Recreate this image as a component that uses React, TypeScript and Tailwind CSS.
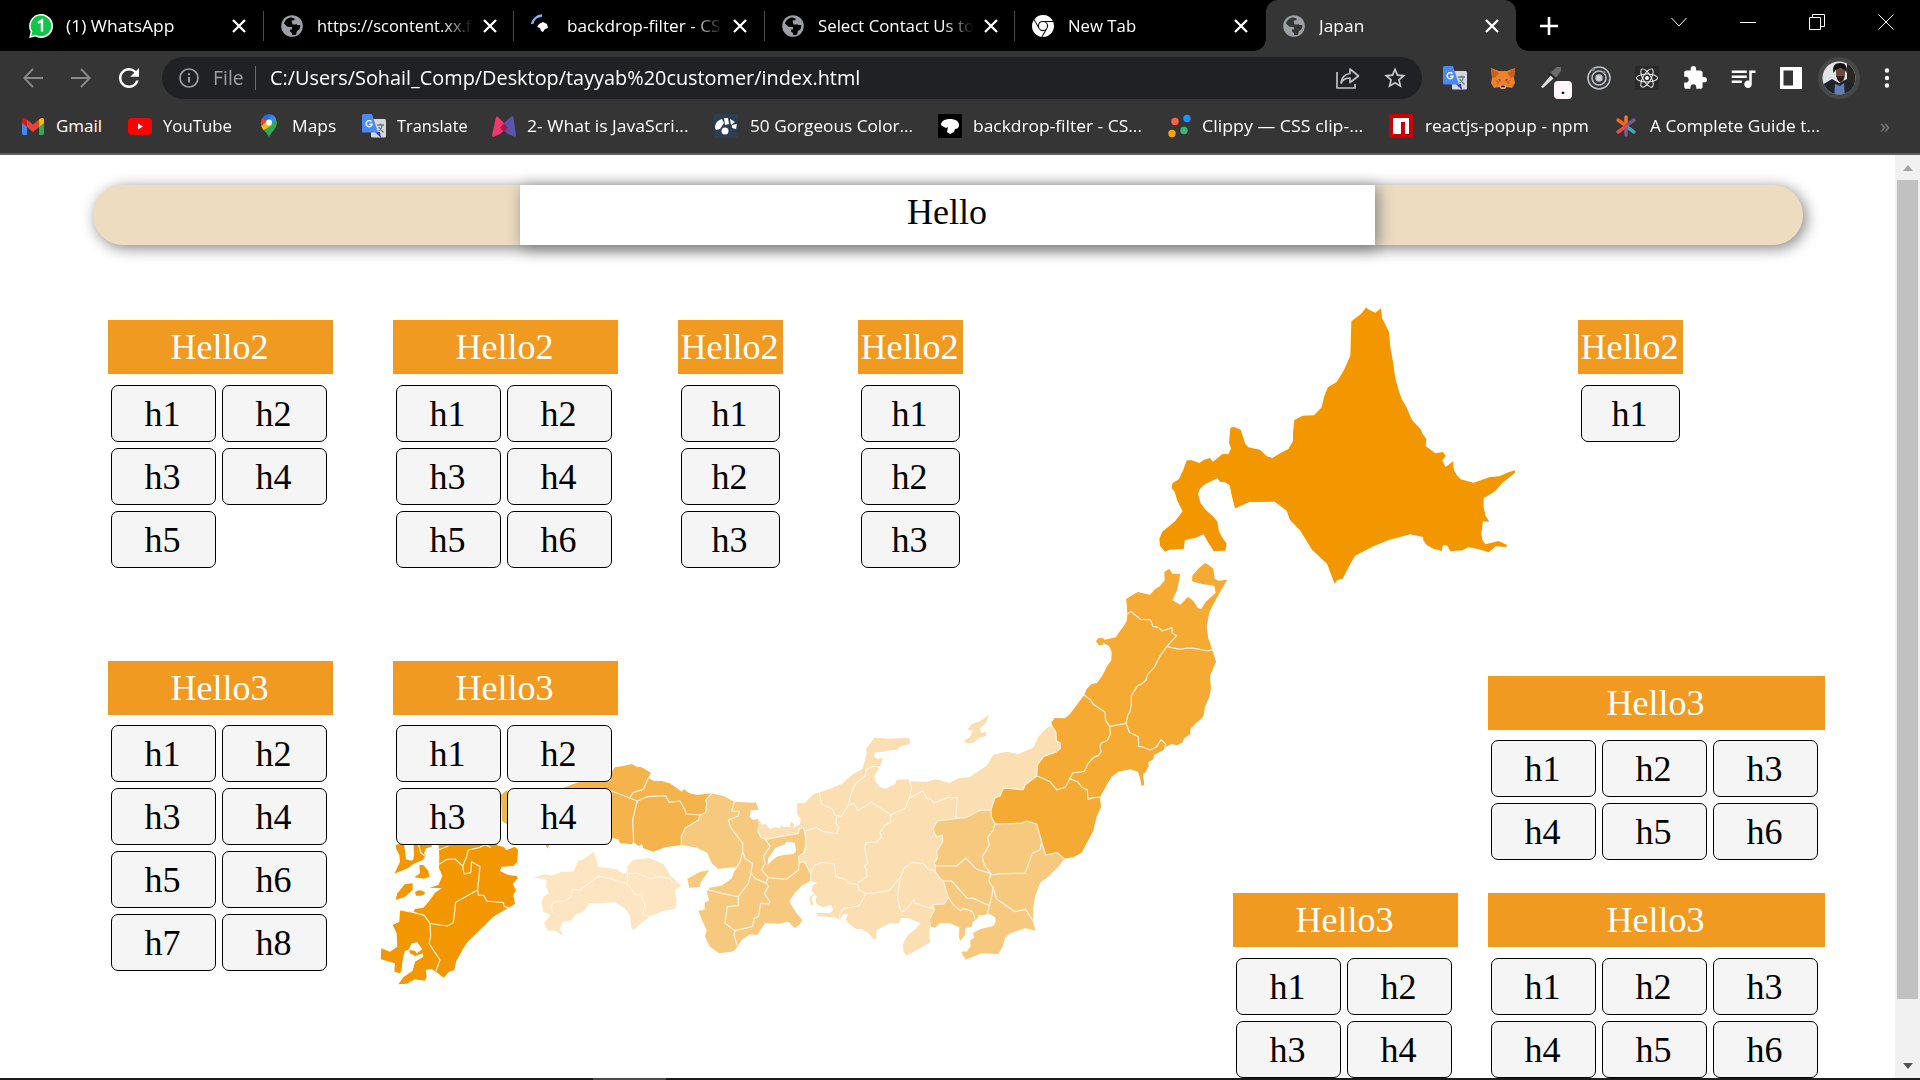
import { useLayoutEffect, useRef, type ReactNode } from "react";
import { FaReact } from "react-icons/fa";
import { MdExtension, MdQueueMusic, MdRefresh, MdStarBorder } from "react-icons/md";
import { SiGooglechrome } from "react-icons/si";

/* One line of text, condensed or stretched to a set advance width. */
function FitText({ children, width, className = "" }: { children: string; width: number; className?: string }) {
  const ref = useRef<HTMLSpanElement>(null);
  useLayoutEffect(() => {
    const el = ref.current;
    if (el) el.style.transform = `scaleX(${width / el.offsetWidth})`;
  }, [width]);
  return (
    <span className={`block shrink-0 whitespace-nowrap ${className}`} style={{ width }}>
      <span ref={ref} className="inline-block origin-left">
        {children}
      </span>
    </span>
  );
}

function Close() {
  return (
    <svg viewBox="0 0 14 14" className="size-3.5" stroke="#fff" strokeWidth="2.3" fill="none">
      <path d="M1 1l12 12M13 1L1 13" />
    </svg>
  );
}

function Globe({ back }: { back: string }) {
  return (
    <svg viewBox="0 0 22 22" className="size-[22px]">
      <circle cx="11" cy="11" r="10.800" fill="#9aa0a6" />
      <path
        d="M10.500 2.500C7 2.500 4 5 3 8.500l3.500 3.200 4.500.3v2.500H9v2l2 1.500v2c1.500.2 3-.1 4-.6l1-3.400 2.200-1.500c.8-1.500 1.200-3 1-4.500H16l-1-2h-4V6h2.500V3.500z"
        fill={back}
      />
      <path d="M10.500 5.500l5-.5 1.500 3-2.500 1.500h-3z" fill="#9aa0a6" />
    </svg>
  );
}

function WhatsApp() {
  return (
    <svg viewBox="0 0 24 24" className="size-6">
      <path d="M12 0a12 12 0 1 1-5.6 22.6L.2 24l1.4-6.2A12 12 0 0 1 12 0z" fill="#fff" />
      <path d="M12 1.600a10.300 10.300 0 1 1-5.200 19.200L2.200 21.900l1.200-4.400A10.300 10.300 0 0 1 12 1.600z" fill="#10c34b" />
      <path d="M9 9l4-2.500v11" fill="none" stroke="#fff" strokeWidth="2.400" />
    </svg>
  );
}

function Loading() {
  return (
    <svg viewBox="0 0 24 24" className="size-6">
      <path d="M2 10A11 11 0 0 1 12 1.500" stroke="#8ab4f8" strokeWidth="2.500" fill="none" />
      <path d="M7 13l2-3 4-2 4 2 1 4-3 1-2 3-2-1-1-3z" fill="#fff" />
    </svg>
  );
}

function Translate() {
  return (
    <svg viewBox="0 0 24 24" className="size-6">
      <rect x="9" y="5" width="15" height="18.500" rx="1.500" fill="#d5d9dd" />
      <path d="M13 18l6 6-1-6z" fill="#3337c9" />
      <path d="M1.500 0H10l6 18.500H1.500A1.500 1.500 0 0 1 0 17V1.500A1.500 1.500 0 0 1 1.500 0z" fill="#4a8af4" />
      <path d="M15 11h7M18.500 9.500V11M20.500 11c-.5 3-2.500 5-4 6M16.500 13l5 5.500" stroke="#647f8c" strokeWidth="1.300" fill="none" />
      <path d="M9.500 7.800a3 3 0 1 0 .6 2.400H7.300" stroke="#fff" strokeWidth="1.400" fill="none" />
    </svg>
  );
}

function Gmail() {
  return (
    <svg viewBox="0 0 22 17" className="h-[17px] w-[22px]">
      <path d="M0 2.500L5 6v11H1.500A1.500 1.500 0 0 1 0 15.500z" fill="#4285f4" />
      <path d="M22 2.500L17 6v11h3.500a1.500 1.500 0 0 0 1.500-1.500z" fill="#34a853" />
      <path d="M17 1.500L19 .3A2 2 0 0 1 22 2v3l-5 4z" fill="#fbbc04" />
      <path d="M5 1.500L3 .3A2 2 0 0 0 0 2v3l5 4z" fill="#c5221f" />
      <path d="M5 1.500l6 5 6-5V9l-6 5-6-5z" fill="#ea4335" />
    </svg>
  );
}

function YouTube() {
  return (
    <svg viewBox="0 0 24 17" className="h-[17px] w-6">
      <rect width="24" height="17" rx="4" fill="#f00" />
      <path d="M10 5.500v6l5-3z" fill="#fff" />
    </svg>
  );
}

function MapsPin() {
  return (
    <svg viewBox="0 0 18 24" className="h-6 w-[18px]">
      <path d="M9 24c0-4 8-9 8-15.500A8 8 0 0 0 14.500 3L2.500 14.500C5 18 8.500 20 9 24z" fill="#34a853" />
      <path d="M1.200 11.500L6 6l6 5-8.500 5.200C2.200 14.500 1.500 13 1.200 11.500z" fill="#fbbc04" />
      <path d="M2.800 3.300L7 7l-5.500 5A9 9 0 0 1 2.800 3.300z" fill="#ea4335" />
      <path d="M2.800 3.300A8.200 8.200 0 0 1 11.500.5L7 7z" fill="#1a73e8" />
      <path d="M11.500.5a8 8 0 0 1 4.600 4.200L11 10 7 7z" fill="#4285f4" />
      <circle cx="9" cy="8.400" r="2.900" fill="#fff" />
    </svg>
  );
}

function Butterfly() {
  return (
    <svg viewBox="0 0 24 21" className="h-[21px] w-6">
      <path d="M4 1Q5 0 6 1L12 7 13 14 8 18 1.500 21Q0 21 0 19z" fill="#f0386b" />
      <path d="M20 0Q21 0 21.500 2L24 19Q24 21 22 20.500L16 18 11 14 12 7z" fill="#5a55ad" />
      <path d="M12 7l4 5-4 4-4-4z" fill="#a31952" />
    </svg>
  );
}

function ColorsIcon() {
  return (
    <svg viewBox="0 0 24 24" className="size-6">
      <rect width="24" height="24" fill="#2c3e50" />
      <g fill="#fff">
        <path d="M1 14c0-5 3-8 7-9l2 4-4 6-4 1z" />
        <path d="M10 4h4l1 6-4 1zM16 5l5 3-4 3zM18 11l5-1-1 5-4-1z" />
        <circle cx="11" cy="17" r="3.500" />
      </g>
    </svg>
  );
}

function CssTricks() {
  return (
    <svg viewBox="0 0 24 24" className="size-6">
      <rect width="24" height="24" fill="#000" />
      <path d="M3 11c0-4 4-6 9-6s9 2 9 6c0 3-2 4-4 4l-1 3-4 2-3-2 1-5-2 1-2-1z" fill="#fff" />
    </svg>
  );
}

function Clippy() {
  return (
    <svg viewBox="0 0 24 24" className="size-6">
      <circle cx="8" cy="7.500" r="3.700" fill="#ff6347" />
      <circle cx="20" cy="4.500" r="3.700" fill="#1e90ff" />
      <circle cx="17" cy="16.500" r="3.700" fill="#3cb371" />
      <circle cx="5" cy="19.500" r="3.700" fill="#ffa500" />
    </svg>
  );
}

function Npm() {
  return (
    <svg viewBox="0 0 24 24" className="size-6">
      <rect width="24" height="24" fill="#cb0000" />
      <path d="M4 4h16v16h-4V8h-4v12H4z" fill="#fff" />
    </svg>
  );
}

function Asterisk() {
  return (
    <svg viewBox="0 0 22 22" className="size-[22px]" strokeWidth="3.400" strokeLinecap="round">
      <path d="M11 10V2" stroke="#ff7a18" />
      <path d="M10 10L3 5" stroke="#f4661e" />
      <path d="M12 10l7-5" stroke="#7d5a86" />
      <path d="M10 12l-7 5" stroke="#ea4d3c" />
      <path d="M12 12l7 5" stroke="#3fa7b5" />
      <path d="M11 12v8" stroke="#8a5a80" />
      <circle cx="11" cy="11" r="2" fill="#d6455d" />
    </svg>
  );
}

function Fox() {
  return (
    <svg viewBox="0 0 24 22" className="h-[22px] w-6">
      <path d="M0 1l8 3h8l8-3-1 10 1 5-3 5-5-1-3 2h-2l-3-2-5 1-3-5 1-5z" fill="#f0812a" />
      <path d="M0 1l8 5-4 5-3-1zM24 1l-8 5 4 5 3-1z" fill="#c9611e" />
      <path d="M4 13l5 1-2 4zM20 13l-5 1 2 4z" fill="#d66a1d" />
      <path d="M7 12l3 1-1 1zM17 12l-3 1 1 1z" fill="#24344a" />
      <path d="M9.500 18h5l.5 3-1.500 1h-3L9 21z" fill="#c7b8aa" />
      <path d="M10.500 18.500h3l.5 1.800h-4z" fill="#1d1a18" />
    </svg>
  );
}

function Dropper() {
  return (
    <span className="relative block size-6">
      <svg viewBox="0 0 24 24" className="size-6">
        <path d="M2 21l10-12 3 3L4 22z" fill="#dfe1e3" />
        <path d="M11 7l7-6h4v4l-6 8z" fill="#6d6d6d" />
        <path d="M10 7l7 6" stroke="#222" strokeWidth="2" />
      </svg>
      <span className="absolute top-[15px] left-[15px] h-[18px] w-[18px] rounded-[4px] bg-[#fdf6fb] text-center text-[15px] leading-[14px] font-bold text-black">
        .
      </span>
    </span>
  );
}

function Target() {
  return (
    <svg viewBox="0 0 24 24" className="size-6" fill="none" stroke="#bdc1c6" strokeWidth="1.600">
      <circle cx="12" cy="12" r="11" />
      <circle cx="12" cy="12" r="7" />
      <circle cx="12" cy="12" r="3" fill="#d0d3d6" />
      <circle cx="6" cy="3.500" r="1.800" fill="#8a8d91" stroke="none" />
      <circle cx="17" cy="6.500" r="1.600" fill="#8a8d91" stroke="none" />
    </svg>
  );
}

function SidePanel() {
  return (
    <svg viewBox="0 0 22 22" className="size-[22px]">
      <path d="M0 0h22v22H0z" fill="#fff" />
      <path d="M3.500 3.500h9.500v15H3.500z" fill="#353535" />
    </svg>
  );
}

function Avatar() {
  return (
    <svg viewBox="0 0 42 42" className="size-[42px]">
      <clipPath id="face">
        <circle cx="21" cy="21" r="16.500" />
      </clipPath>
      <circle cx="21" cy="21" r="21" fill="#474747" />
      <g clipPath="url(#face)">
        <path d="M0 0h42v42H0z" fill="#dfe3e6" />
        <path d="M29 4h13v38H29z" fill="#2a2622" />
        <path d="M4 42V28l10-6 7 4 8-4 8 7v13z" fill="#20242c" />
        <path d="M16 42l1-15 5 2 4-3 1 16z" fill="#5f7fb5" />
        <path d="M18 12h9v7l-2 6h-4l-3-6z" fill="#6d4a3b" />
        <path d="M15.500 16c-1.500-7 1.500-10 6.500-10s8 3 6.500 10l-2-3.500-4-1-4.500 1z" fill="#15110f" />
        <path d="M18.500 19h7.500l-1 4-2.500 2-3-2z" fill="#2a1d18" />
      </g>
    </svg>
  );
}

const tabs: { icon: ReactNode; label: string; width: number; fade?: boolean; active?: boolean }[] = [
  { icon: <WhatsApp />, label: "(1) WhatsApp", width: 108 },
  { icon: <Globe back="#000" />, label: "https://scontent.xx.f", width: 154, fade: true },
  { icon: <Loading />, label: "backdrop-filter - CS", width: 154, fade: true },
  { icon: <Globe back="#000" />, label: "Select Contact Us to", width: 156, fade: true },
  { icon: <SiGooglechrome className="size-[22px] text-white" />, label: "New Tab", width: 68 },
  { icon: <Globe back="#353535" />, label: "Japan", width: 45, active: true },
];

function TabStrip() {
  return (
    <div className="flex h-[51px] bg-black pl-[13px] text-white">
      {tabs.map((tab, i) => (
        <div
          key={i}
          className={`relative flex h-full w-[250.500px] shrink-0 items-center pl-[14px] ${tab.active ? "rounded-t-[12px] bg-[#353535]" : ""}`}
        >
          {tab.active && (
            <>
              <span className="absolute bottom-0 -left-3 size-3 bg-[radial-gradient(circle_at_0_0,#000_11.500px,#353535_12px)]" />
              <span className="absolute -right-3 bottom-0 size-3 bg-[radial-gradient(circle_at_100%_0,#000_11.500px,#353535_12px)]" />
            </>
          )}
          <span className="flex w-[28px] shrink-0 items-center justify-center">{tab.icon}</span>
          <span
            className={`ml-[11px] w-[155px] overflow-hidden ${tab.fade ? "[mask-image:linear-gradient(to_right,#000_125px,transparent_156px)]" : ""}`}
          >
            <FitText width={tab.width} className="text-[17px] leading-[30px]">
              {tab.label}
            </FitText>
          </span>
          <span className="ml-[11px]">
            <Close />
          </span>
          {i < 4 && <span className="ml-auto h-[30px] w-px bg-[#4c4c4c]" />}
        </div>
      ))}
      <div className="ml-6 flex items-center">
        <svg viewBox="0 0 18 18" className="size-[18px]" stroke="#fff" strokeWidth="2.600">
          <path d="M9 0v18M0 9h18" />
        </svg>
      </div>
      <div className="mt-[-8px] ml-auto flex items-center gap-[53px] pr-[26px]">
        <svg viewBox="0 0 16 16" className="size-4" fill="none" stroke="#fff" strokeWidth="1">
          <path d="M.5 4l7.500 8 7.500-8" />
        </svg>
        <svg viewBox="0 0 16 16" className="size-4" stroke="#fff" strokeWidth="1">
          <path d="M0 8.500h16" />
        </svg>
        <svg viewBox="0 0 16 16" className="size-4" fill="none" stroke="#fff" strokeWidth="1">
          <path d="M.5 3.500h11v12H.5zM3.500 3.500v-3h12v12h-4" />
        </svg>
        <svg viewBox="0 0 16 16" className="size-4" fill="none" stroke="#fff" strokeWidth="1">
          <path d="M.5 .5l15 15M15.500 .5l-15 15" />
        </svg>
      </div>
    </div>
  );
}

const extensions: ReactNode[] = [
  <Translate />,
  <Fox />,
  <Dropper />,
  <Target />,
  <span className="flex size-6 items-center justify-center bg-[#2a2a2a]">
    <FaReact className="size-[22px] text-white" />
  </span>,
  <MdExtension className="size-[26px] text-white" />,
  <MdQueueMusic className="size-[30px] text-white" />,
  <SidePanel />,
  <Avatar />,
  <svg viewBox="0 0 6 20" className="h-5 w-1.5" fill="#fff">
    <circle cx="3" cy="2.500" r="2.200" />
    <circle cx="3" cy="10" r="2.200" />
    <circle cx="3" cy="17.500" r="2.200" />
  </svg>,
];

function Toolbar() {
  return (
    <div className="flex h-[54px] items-center pl-[9px]">
      <span className="flex w-12 justify-center">
        <svg viewBox="0 0 20 20" className="size-5" fill="none" stroke="#8a8a8a" strokeWidth="1.800">
          <path d="M20 10H1.500M10 1L1.300 10l8.700 9" />
        </svg>
      </span>
      <span className="flex w-12 justify-center">
        <svg viewBox="0 0 20 20" className="size-5" fill="none" stroke="#8a8a8a" strokeWidth="1.800">
          <path d="M0 10h18.500M10 1l8.700 9-8.700 9" />
        </svg>
      </span>
      <span className="flex w-12 justify-center">
        <MdRefresh className="size-[30px] text-white" />
      </span>
      <div className="ml-[9px] flex h-[42px] w-[1260px] items-center rounded-full bg-[#202124] pr-3.5 pl-[17px]">
        <svg viewBox="0 0 20 20" className="size-5" fill="none" stroke="#9aa0a6" strokeWidth="1.700">
          <circle cx="10" cy="10" r="9" />
          <path d="M10 9v5.500M10 5.300v2" strokeWidth="2" />
        </svg>
        <FitText width={31} className="ml-3.5 text-[20px] leading-[30px] text-[#9aa0a6]">
          File
        </FitText>
        <span className="ml-[11px] h-6 w-px bg-[#6b6d70]" />
        <FitText width={590} className="ml-3.5 text-[20px] leading-[30px] text-white">
          C:/Users/Sohail_Comp/Desktop/tayyab%20customer/index.html
        </FitText>
        <svg viewBox="0 0 24 22" className="ml-auto h-[22px] w-6" fill="none" stroke="#bdc1c6" strokeWidth="1.700">
          <path d="M1 5v16h18v-4" />
          <path d="M5 16c1-6 4-9 9-9.500V2l8.500 7-8.500 6.500V11c-4 0-7 1.500-9 5z" strokeLinejoin="round" />
        </svg>
        <MdStarBorder className="ml-[22px] size-[26px] text-[#c4c7cb]" />
      </div>
      <div className="ml-[9px] flex items-center">
        {extensions.map((icon, i) => (
          <span key={i} className="flex h-[42px] w-12 items-center justify-center">
            {icon}
          </span>
        ))}
      </div>
    </div>
  );
}

const bookmarks: { icon: ReactNode; label: string; width: number; box: string; gap: string }[] = [
  { icon: <Gmail />, label: "Gmail", width: 46, box: "w-[106px]", gap: "ml-3" },
  { icon: <YouTube />, label: "YouTube", width: 69, box: "w-[132px]", gap: "ml-[11px]" },
  { icon: <MapsPin />, label: "Maps", width: 44, box: "w-[102px]", gap: "ml-3.5" },
  { icon: <Translate />, label: "Translate", width: 71, box: "w-[130px]", gap: "ml-[11px]" },
  { icon: <Butterfly />, label: "2- What is JavaScri...", width: 162, box: "w-[222px]", gap: "ml-[11px]" },
  { icon: <ColorsIcon />, label: "50 Gorgeous Color...", width: 163, box: "w-[224px]", gap: "ml-3" },
  { icon: <CssTricks />, label: "backdrop-filter - CS...", width: 169, box: "w-[229px]", gap: "ml-[11px]" },
  { icon: <Clippy />, label: "Clippy — CSS clip-...", width: 161, box: "w-[222px]", gap: "ml-[11px]" },
  { icon: <Npm />, label: "reactjs-popup - npm", width: 164, box: "w-[226px]", gap: "ml-3" },
  { icon: <Asterisk />, label: "A Complete Guide t...", width: 170, box: "w-[265px]", gap: "ml-[13px]" },
];

function Bookmarks() {
  return (
    <div className="flex h-[42px] items-center pl-[22px] text-[17px] text-white">
      {bookmarks.map((b) => (
        <div key={b.label} className={`flex shrink-0 items-center ${b.box}`}>
          {b.icon}
          <FitText width={b.width} className={`leading-[30px] ${b.gap}`}>
            {b.label}
          </FitText>
        </div>
      ))}
      <span className="text-[20px] leading-[30px] text-[#7b7b7b]">»</span>
    </div>
  );
}

/* Pale separators drawn between prefectures. */
const border = { fill: "none", stroke: "#fef4e2", strokeWidth: 3.6, strokeLinejoin: "round" as const };

function JapanMap() {
  return (
    <svg viewBox="360 290 1180 710" className="absolute top-[135px] left-[360px] h-[710px] w-[1180px]">
      {/* Hokkaido */}
      <g transform="translate(1140 290) scale(.33333)">
        <path
          fill="#f39700"
          d="M679 52L684 58 706 68 723 55 726 84 738 107 747 126 751 170 759 215 766 265 775 298 785 327 799 351 816 390 842 418 848 432 859 446 857 468 886 490 909 486 917 498 907 512 917 531 939 514 942 541Q948 555 962 568L1001 578 1050 561 1078 559 1105 547 1125 541 1125 548 1086 580 1065 604 1031 625 1031 652 1037 678 1048 695 1029 694 1024 730 1027 750 1036 763 1075 753 1100 764 1100 771 1067 769 1046 787 1017 778 985 771 968 781 931 784 922 767 912 765 906 771 906 783 880 776 860 765 850 751 849 741 811 733 746 750 700 769 645 797 627 829 608 866 592 870 584 881 561 821 516 779 480 721 450 690 440 662 404 635 328 636 300 649 285 655 276 620 269 586 255 577 240 575 232 565 196 582 180 596 174 611 182 640 198 661 220 680 232 695 237 724 246 742 260 761 256 782 221 783 200 750 191 733 165 744 135 750 131 777 88 779 75 785 60 767 58 746 67 725 105 694 128 664 112 632 104 605 95 595 97 580 117 567 130 539 140 511 155 511 178 519 192 509 210 504 219 515 246 493 266 491 273 475 267 458 271 414 281 410 302 419 315 460 325 472 360 479 380 499 398 504 420 490 445 477 459 453 459 428 463 390 488 377 522 376 545 352 552 320 564 292 590 276 612 240 631 197 634 94 663 72Z"
        />
      </g>

      {/* Chubu and Kanto */}
      <g transform="translate(780 700) scale(.33333)">
        <path
          fill="#fbdeb1"
          d="M815 76L828 98 829 124 840 128 841 145 830 155 790 170 772 195 772 228 735 255 730 269 670 264 660 288 645 293 633 330 600 331 560 352 524 356 472 363 460 385 462 397 470 411 487 405 488 425 470 455 472 475 463 487 466 498 466 515 478 533 490 543 505 592 492 612 457 614 463 630 450 655 450 680 447 700 451 727 420 745 378 767 370 752 369 732 382 707 405 688 422 670 385 654 363 654 357 671 330 670 290 690 288 716 283 719 265 700 245 687 230 687 205 670 198 658 204 643 192 641 184 652 180 660 165 652 115 648 108 643 110 638 150 640 159 632 156 617 150 614 130 622 110 613 106 595 112 590 102 584 97 590 95 600 102 614 93 616 88 600 90 590 103 581 95 570 98 556 112 549 93 543 92 520 75 485 57 490 55 472 75 460 80 440 76 420 77 395 64 384 57 383 55 400 20 405 -2 410 -43 418 -58 412 -67 390 -67 355 -52 376 -45 370 -30 388 -15 382 0 385 4 374 10 382 20 380 28 382 33 365 42 372 40 385 60 372 62 357 52 343 51 310 75 308 100 283 120 277 155 265 185 252 220 222 247 207 255 180 260 160 258 147 284 113 330 116 385 113 390 120 389 132 360 140 350 150 335 150 310 155 285 157 282 168 295 178 308 172 305 190 298 202 283 228 285 242 300 262 316 266 345 253 350 240 385 238 392 244 440 246 465 238 480 240 508 250 535 235 568 232 600 210 620 197 640 164 680 155 715 162 760 143 775 110 800 84Z"
        />
        <path fill="#fbdeb1" d="M627 44L618 68 600 85 603 98 621 96 617 108 597 114 580 128 563 131 551 122 570 112 578 92 562 90 575 72 600 64Z" />
        <path
          fill="#f7c97e"
          d="M633 330L634 350 645 372 722 370 740 363 770 372 785 425 797 465 832 458 853 476 840 495 805 530 780 548 765 590 760 625 760 665 768 692 735 685 690 700 675 715 668 740 655 762 605 760 557 779 545 760 548 754 560 755 572 738 570 722 583 712 578 700 600 688 640 678 647 665 645 652 635 645 622 640 615 645 596 645 592 656 578 666 575 680 556 685 555 705 542 722 537 713 538 682 510 670 480 670 465 683 452 680 450 655 463 630 457 614 492 612 505 592 490 543 478 533 466 515 466 498 463 487 472 475 470 455 488 425 487 405 470 411 462 397 460 385 472 363 524 356 560 352 600 331Z"
        />
        <g {...border}>
          <path d="M118 277L125 312 158 328 165 345 184 349 205 315 215 275 228 250 255 228 258 210 275 200 298 200" />
          <path d="M205 315L222 310 233 332 274 306 310 330 334 344 375 325 388 295 395 262 388 240" />
          <path d="M388 295L428 272 440 295 452 298 463 309 500 293 532 293 527 356" />
          <path d="M170 349L168 370 175 380 172 401 130 395 108 383 77 393" />
          <path d="M334 344L330 368 315 375 300 398 305 411 290 426 257 428 254 445 263 490 255 498 262 528 235 548" />
          <path d="M92 517L105 495 125 487 163 492 168 530 195 538 207 550 233 554 237 570 258 581 237 618 192 625 180 640 178 658" />
          <path d="M258 581L295 577 327 572 362 530 355 570 353 598 362 632 373 635 402 598 405 610 420 612 430 618 458 625" />
          <path d="M362 530L372 505 395 488 430 490 445 508 466 512" />
          <path d="M633 330L600 331 560 352 524 356 472 363 460 385 462 397 470 411 487 405 488 425 470 455 472 475 463 487 466 498 466 515 478 533 490 543 505 592 492 612 457 614 463 630 450 655" />
          <path d="M645 372L640 390 623 412 628 435 607 470 612 493 632 520" />
          <path d="M466 498L530 498 557 474 590 508 632 520 627 545 640 565" />
          <path d="M632 525L665 521 735 520 757 460 780 450 785 425" />
          <path d="M640 565L650 597 705 635 737 628 760 665 768 692" />
          <path d="M490 543L515 543 562 595 580 595 628 617" />
          <path d="M505 592L520 615 542 632 550 625 578 635 585 658" />
          <path d="M640 560L635 590 628 617 622 645" />
        </g>
      </g>

      {/* Tohoku */}
      <g transform="translate(960 550) scale(.33333)">
        <path
          fill="#f5aa33"
          d="M498 147L533 126 570 134 585 118 600 108 614 91 613 66 628 56 637 71 660 72 657 95 651 120 637 151 661 164 684 140 700 153 714 175 724 177 736 157 767 128 763 107 725 102 696 94 697 77 716 55 735 39 745 44 760 56 764 86 775 92 802 89 778 130 748 186 740 230 745 265 756 298 768 335 750 378 753 415 748 440 735 470 730 500 708 520 691 537 691 552 673 565 667 578 650 586 635 582 618 590 611 600 582 615 580 628 565 637 566 650 555 669 549 672 553 705 545 708 540 685 534 665 510 658 475 665 455 680 440 705 420 742 423 772 410 800 400 842 365 908 340 922 313 926 292 908 257 915 245 875 230 822 200 813 182 820 105 822 94 800 93 780 105 743 120 738 130 714 190 719 195 705 230 678 232 645 250 620 290 605 301 595 300 578 289 574 288 548 275 526 275 516 284 504 314 505 330 492 373 434 380 417 395 402 411 399 430 372 440 350 454 331 455 305 447 288 430 279 427 286 416 285 408 274 414 265 427 264 435 269 467 262 480 243 493 226 501 211 502 190 500 160Z"
        />
        <g {...border}>
          <path d="M502 193L512 184 541 208 571 209 579 229 596 233 607 243 636 233 636 249 650 257 620 290 600 318 583 352 563 373 558 390 545 402 533 407 514 437 514 462 510 486 504 494 498 520" />
          <path d="M620 290L661 298 680 294 703 295 744 303 756 299" />
          <path d="M373 436L392 450 400 463 435 487 437 511 449 529 498 520 508 547 535 560 536 589 548 591 570 600 590 590 603 569 617 582 614 598" />
          <path d="M449 529L451 553 441 572 424 579 419 590 424 604 415 617 400 622 385 640 373 664 338 669 329 686 317 711 291 720 270 695 232 678" />
          <path d="M329 686L354 696 365 711 382 720 384 748 400 743 420 742" />
          <path d="M313 926L292 908 257 915 245 875 230 822 200 813 182 820 105 822 94 800 93 780 105 743 120 738 130 714 190 719 195 705 230 678 232 645 250 620 290 605 301 595 300 578 289 574 288 548 275 526" />
        </g>
      </g>

      {/* Chugoku, Kinki and Shikoku */}
      <g transform="translate(520 740) scale(.33333)">
        <path
          fill="#f5b44b"
          d="M575 160L557 180 560 190 557 218 540 225 535 240 495 265 484 290 484 315 435 322 400 335 370 325 366 313 355 318 340 305 335 313 300 310 295 298 275 293 200 300 95 300 83 326 76 312 0 260 -40 253 -54 243 -57 165 -39 150 -20 185 60 170 130 143 175 127 270 122 275 95 285 82 310 78 335 72 350 80 365 82 393 98 385 113 400 122 425 123 450 130 485 155 492 147 505 158 530 165Z"
        />
        <path
          fill="#f7c97e"
          d="M575 160L610 168 643 185 700 188 708 187 716 210 693 210 688 230 700 240 713 236 715 250 713 270 722 292 737 298 778 290 835 280 838 266 850 263 857 290 857 320 850 340 835 350 838 367 853 365 872 400 872 423 845 437 825 458 810 480 812 492 830 520 847 540 840 552 825 565 805 545 775 551 735 550 712 585 690 583 665 600 655 617 645 630 635 635 597 640 570 620 555 590 560 570 548 545 535 512 553 510 555 487 568 482 560 455 568 448 568 443 605 437 635 415 648 380 595 387 575 370 562 338 530 323 484 315 484 290 495 265 535 240 540 225 557 218 560 190 557 180Z"
        />
        <path fill="#f7c97e" d="M568 391L540 395 502 416 508 443 540 440 543 425Z" />
        <path fill="#fff" d="M743 375L745 355 765 325 795 312 800 305 825 308 828 335 820 342 790 345 770 350 755 362Z" />
        <path
          fill="#fce5c0"
          d="M222 335L235 380 290 388 310 402 322 395 322 378 340 360 388 354 430 372 450 405 484 437 465 450 470 478 467 506 430 513 387 530 340 571 333 560 330 525 312 503 285 487 240 490 208 490 190 515 165 525 155 540 128 545 120 565 128 588 108 572 85 572 72 550 92 525 70 515 65 490 70 470 88 460 78 440 80 418 40 413 75 403 95 407 125 395 160 395 175 362 190 358Z"
        />
        <g {...border}>
          <path d="M385 113L370 148 340 157 330 172" />
          <path d="M275 153L352 183 382 170 437 167 447 187 480 183 495 210 498 222 540 225" />
          <path d="M352 183L345 210 338 240 341 305" />
          <path d="M575 160L557 180 560 190 557 218 540 225 535 240 495 265 484 290 484 315" />
          <path d="M643 185L635 213 658 215 655 228 625 240 632 262 668 310 668 335 660 365 645 390" />
          <path d="M668 335L675 355 697 370 693 400 705 415 738 430" />
          <path d="M693 400L685 430 655 470M565 450L605 460 655 470" />
          <path d="M737 298L750 320 730 350 735 370 725 390 745 413 800 418 835 390 838 367" />
          <path d="M738 425L745 413M738 425L745 440 733 460 750 485 745 492 722 490 715 530 703 535 697 560 645 572" />
          <path d="M655 470L655 497 622 500 615 550 645 572 642 585 652 617" />
          <path d="M713 270L722 292 737 298 778 290 835 280 838 266 850 263 857 290 857 320 850 340 835 350 838 367 853 365 872 400 872 423" />
          <path d="M98 518L92 500 100 487 140 480 152 470 157 448 180 450 237 408 280 418 322 432 348 465 365 463 368 480 375 495 368 522 387 530" />
          <path d="M322 395L322 432M322 400L350 400 372 408 390 415 420 410 450 415 458 430" />
        </g>
      </g>

      {/* Kyushu */}
      <g transform="translate(360 740) scale(.33333)">
        <g fill="#f39700">
          <path d="M235 300L395 300 415 318 430 320 440 330 465 320 474 330 472 365 460 378 425 380 420 393 445 405 470 408 473 415 458 432 468 450 460 465 465 492 445 503 400 530 360 570 325 603 310 625 288 665 283 690 265 697 252 713 227 695 215 687 197 690 200 710 195 722 165 718 140 731 115 733 130 712 158 692 165 665 190 650 188 640 165 648 150 640 148 630 165 632 170 640 187 628 172 607 155 610 145 630 135 632 130 650 127 665 125 690 120 700 103 695 105 670 62 658 64 625 90 635 112 620 110 580 98 555 118 545 120 510 160 517 165 507 190 503 210 480 225 458 245 445 208 443 235 435 247 408 237 385 238 350Z" />
          <path d="M108 314L132 310 138 358 155 362 160 358 162 345 160 300 215 300 215 320 198 325 192 340 198 347 188 360 160 372 145 384 103 401 120 365 118 345 108 325Z" />
          <path d="M178 375L190 375 205 392 208 410 192 416 163 412 180 400Z" />
          <path d="M135 432L158 430 158 450 135 470 107 480 112 460Z" />
          <path d="M165 457Q178 444 196 458Q188 470 168 467Z" />
        </g>
        <g {...border}>
          <path d="M120 510L160 517 193 526 210 550 240 555 262 558 280 548 287 487 353 450" />
          <path d="M210 550L212 590 207 610 240 660 227 695" />
          <path d="M353 450L355 465 372 467 380 483 430 488 433 500 445 503" />
          <path d="M353 450L360 380 335 365 332 398 312 402 308 378 285 357 262 358 237 373" />
          <path d="M308 378L320 350 325 330 360 322 375 314 392 322" />
          <path d="M235 330L265 318M176 314L182 338 198 350" />
        </g>
      </g>
    </svg>
  );
}

function Group({
  title,
  count,
  cols = 2,
  tight = false,
  className = "",
}: {
  title: string;
  count: number;
  cols?: 1 | 2 | 3;
  tight?: boolean;
  className?: string;
}) {
  const outer = { 1: "w-[105px]", 2: "w-[225px]", 3: "w-[337px]" }[cols];
  const grid = { 1: "grid-cols-[99px]", 2: "grid-cols-[105px_105px]", 3: "grid-cols-[105px_105px_105px]" }[cols];
  return (
    <section className={`shrink-0 text-[36px] ${outer} ${className}`}>
      <h2 className="h-[54px] bg-[#f09a22] pr-0.5 text-center leading-[55px] whitespace-nowrap text-white">{title}</h2>
      <div className={`ml-[3px] grid gap-1.5 ${tight ? "mt-2.5" : "mt-[11px]"} ${grid}`}>
        {Array.from({ length: count }, (_, i) => (
          <div
            key={i}
            className={`h-[57px] rounded-[7px] border border-black bg-[#f5f5f5] pr-0.5 text-center ${tight ? "leading-[57px]" : "leading-[56px]"}`}
          >
            h{i + 1}
          </div>
        ))}
      </div>
    </section>
  );
}

function Page() {
  return (
    <main className="relative h-[923px] w-[1895px] overflow-hidden bg-white font-['Liberation_Serif',serif] text-black">
      <JapanMap />
      <header className="relative mt-[30px] ml-[92.500px] flex h-[60px] w-[1710px] justify-center rounded-[30px] bg-[#eedcc0] shadow-[3px_3px_15px_#808080]">
        <div className="h-full w-[855px] bg-white pr-px text-center text-[36px] leading-[55px] shadow-[3px_3px_15px_#808080]">Hello</div>
      </header>
      <div className="relative mt-[75px] ml-[108px] flex">
        <div className="flex w-[1125px] flex-col">
          <div className="flex h-[341px]">
            <Group title="Hello2" count={5} />
            <Group title="Hello2" count={6} className="ml-[60px]" />
            <Group title="Hello2" count={3} cols={1} className="ml-[60px]" />
            <Group title="Hello2" count={3} cols={1} className="ml-[75px]" />
          </div>
          <div className="flex gap-[60px]">
            <Group title="Hello3" count={8} tight />
            <Group title="Hello3" count={4} tight />
          </div>
        </div>
        <div className="flex w-[592px] flex-col">
          <div className="h-[356px] pl-[345px]">
            <Group title="Hello2" count={1} cols={1} />
          </div>
          <div className="h-[217px] pl-[255px]">
            <Group title="Hello3" count={6} cols={3} tight />
          </div>
          <div className="flex gap-[30px]">
            <Group title="Hello3" count={4} />
            <Group title="Hello3" count={6} cols={3} />
          </div>
        </div>
      </div>
    </main>
  );
}

function Scrollbar() {
  return (
    <div className="flex h-[923px] w-[25px] flex-col items-center bg-[#f1f1f1]">
      <svg viewBox="0 0 10 6" className="mt-[10px] h-1.5 w-2.5">
        <path d="M5 0l5 6H0z" fill="#a3a3a3" />
      </svg>
      <div className="mt-[9px] h-[819px] w-[21px] bg-[#c1c1c1]" />
      <svg viewBox="0 0 10 6" className="mt-16 h-1.5 w-2.5">
        <path d="M5 6l5-6H0z" fill="#505050" />
      </svg>
    </div>
  );
}

export default function App() {
  return (
    <div className="flex h-[1080px] w-[1920px] flex-col overflow-hidden bg-white">
      <div className="h-[155px] border-b-2 border-[#5f5f5f] bg-[#353535] font-['Open_Sans','Noto_Sans',sans-serif]">
        <TabStrip />
        <Toolbar />
        <Bookmarks />
      </div>
      <div className="flex">
        <Page />
        <Scrollbar />
      </div>
      <div className="h-0.5 bg-[#1c1c1e]">
        <div className="ml-[593px] h-full w-[73px] bg-[#4a4a4a]" />
      </div>
    </div>
  );
}
